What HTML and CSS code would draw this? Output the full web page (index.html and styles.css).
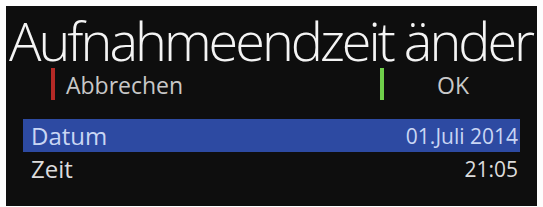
FILE: index.html
```html
<!DOCTYPE html>
<html>
    <head>
        <title>Aufnahmeendzeit ändern</title>
        <link rel="stylesheet" href="styles.css">
    </head>
    <body>
        <div class="screen">
            <h1 class="screen-title">Aufnahmeendzeit änder</h1>
            <div class="key-bar">
                <div class="key key-red">Abbrechen</div>
                <div class="key key-green">OK</div>
            </div>
            <div class="menu-list">
                <div class="menu-row selected">
                    <span class="label">Datum</span>
                    <span class="value">01.Juli 2014</span>
                </div>
                <div class="menu-row">
                    <span class="label">Zeit</span>
                    <span class="value">21:05</span>
                </div>
            </div>
        </div>
    </body>
</html>
```

FILE: styles.css
```css
body {
    margin: 0;
    padding: 6px 6px 1px 6px;
    background: #fdfdfd;
    font-family: "Open Sans", "DejaVu Sans", sans-serif;
}

.screen {
    height: 200px;
    background: #0e0e0e;
    overflow: hidden;
    color: #e0e0e0;
}

.screen-title {
    margin: 0;
    padding: 7px 0 0 3px;
    font-size: 54px;
    font-weight: 300;
    line-height: 55px;
    letter-spacing: -3px;
    color: #f4f4f4;
    white-space: nowrap;
}

.key-bar {
    display: flex;
    height: 32px;
}

.key {
    display: flex;
    align-items: center;
    padding-top: 1px;
    font-size: 23px;
    color: #c8c8c8;
    border-left: 4px solid;
    padding-left: 11px;
}

.key-red {
    margin-left: 45px;
    width: 314px;
    border-color: #b52a26;
}

.key-green {
    border-color: #6fcf4a;
    padding-left: 53px;
}

.menu-list {
    margin: 19px 17px 0 17px;
}

.menu-row {
    display: flex;
    justify-content: space-between;
    align-items: center;
    height: 33px;
    padding: 0 2px 0 8px;
    font-size: 24px;
    color: #dcdcdc;
}

.menu-row .value {
    font-size: 21px;
}

.menu-row.selected {
    background: #2d4aa2;
    color: #c9d6f4;
}
```
